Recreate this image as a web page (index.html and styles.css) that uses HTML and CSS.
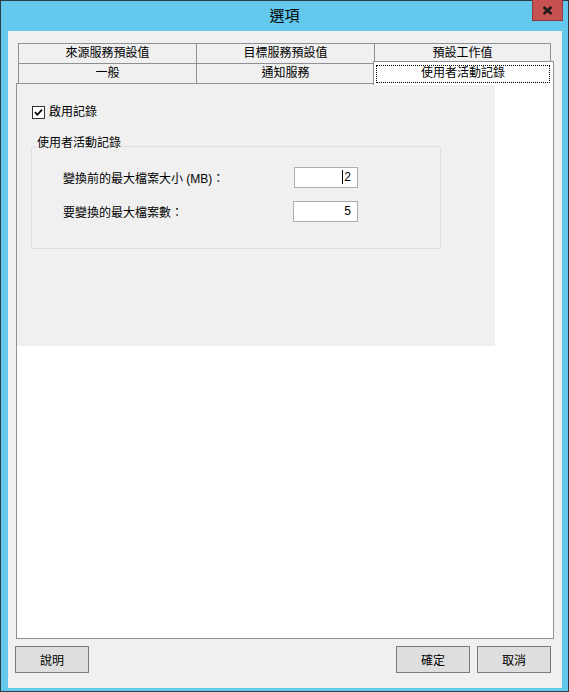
FILE: index.html
```
<!DOCTYPE html>
<html lang="zh-Hant">
<head>
<meta charset="UTF-8">
<title>選項</title>
<link rel="stylesheet" href="styles.css">
</head>
<body>
<div class="win">
  <div class="titlebar">
    <div class="title">選項</div>
    <div class="close">
      <svg width="11" height="9" viewBox="0 0 11 9"><path d="M1.5 1 L9.5 8 M9.5 1 L1.5 8" stroke="#1a1a1a" stroke-width="2.4" fill="none"/></svg>
    </div>
  </div>

  <div class="client">
    <!-- tab strip, two rows -->
    <div class="tabs">
      <div class="tabrow">
        <div class="tab">來源服務預設值</div>
        <div class="tab">目標服務預設值</div>
        <div class="tab last">預設工作值</div>
      </div>
      <div class="tabrow row2">
        <div class="tab">一般</div>
        <div class="tab">通知服務</div>
        <div class="tab active"><div class="focus">使用者活動記錄</div></div>
      </div>
    </div>

    <div class="panel">
      <div class="page">
        <label class="check">
          <svg width="13" height="13" viewBox="0 0 13 13"><rect x="0.5" y="0.5" width="12" height="12" fill="#fff" stroke="#333"/><path d="M3 6.2 L5.4 8.8 L10 3.6" stroke="#000" stroke-width="1.7" fill="none"/></svg>
          啟用記錄
        </label>
        <div class="group">
          <div class="group-title"><span>使用者活動記錄</span></div>
          <div class="field">
            <span class="lbl">變換前的最大檔案大小 (MB)：</span>
            <div class="num first"><span class="caret"></span>2</div>
          </div>
          <div class="field second">
            <span class="lbl">要變換的最大檔案數：</span>
            <div class="num">5</div>
          </div>
        </div>
      </div>
    </div>

    <div class="buttons">
      <button>說明</button>
      <span class="spacer"></span>
      <button>確定</button>
      <button>取消</button>
    </div>
  </div>
</div>
</body>
</html>
```

FILE: styles.css
```
*{box-sizing:border-box}
body{margin:0;font:12px "Liberation Sans","Noto Sans CJK TC",sans-serif;color:#000}
/* window frame */
.win{width:569px;height:692px;background:#62c9ec;border:1px solid #2f3b42;display:flex;flex-direction:column}
.titlebar{height:30px;display:grid;grid-template-columns:1fr auto 1fr;align-items:center}
.title{grid-column:2;font-size:15px;line-height:18px}
.close{grid-column:3;justify-self:end;align-self:start;width:31px;height:21px;margin:-1px 5px 0 0;
       background:#c75050;border:1px solid #8f3b3b;border-top:0;display:flex;align-items:center;justify-content:center}
.client{flex:1;margin:0 6px 3px 7px;background:#f0f0f0;padding-top:12px;display:flex;flex-direction:column}
/* tabs */
.tabs{margin:0 8px;padding-left:2px}
.tabrow{display:flex;align-items:flex-start}
.tab{width:179px;height:21px;margin-right:-1px;border:1px solid #8e9096;background:#f0f0f0;
     text-align:center;line-height:19px;white-space:nowrap}
.tab.last{width:177px}
.row2{margin-top:-1px}
.row2 .tab{height:20px;border-bottom:0}
.row2 .tab.active{position:relative;z-index:1;width:181px;height:24px;margin:-2px 0 -2px -1px;background:#fff;padding:3px 3px 2px 2px}
.focus{height:18px;border:1px dotted #000;line-height:14px}
/* page */
.panel{margin:0 8px;height:556px;border:1px solid #8e9096;background:#fff}
.page{width:478px;height:262px;background:#f0f0f0;padding:22px 0 0 14px}
.check{display:flex;align-items:center;gap:4px;margin-left:1px;height:13px;line-height:13px}
.check svg{display:block}
.group{width:410px;margin-top:27px;border:1px solid #d9dee3;border-radius:3px;padding:0 0 26px 31px}
.group-title{margin:-11px 0 0 -27px;line-height:14px}
.group-title span{background:#f0f0f0;padding:0 1px}
.field{display:flex;align-items:center;height:21px;margin-top:17px}
.field.second{margin-top:13px}
.lbl{width:230px;white-space:nowrap}
.num{width:65px;height:21px;border:1px solid #abadb3;background:#fff;text-align:right;padding-right:6px;line-height:19px}
.num.first{width:64px;margin-left:1px}
.caret{display:inline-block;width:1px;height:14px;background:#000;vertical-align:-3px;margin-right:1px}
/* bottom buttons */
.buttons{display:flex;gap:7px;margin:7px 11px 0 7px}
.buttons button{width:74px;height:27px;border:1px solid #7b7b7b;background:#dedede;font:inherit;color:#000;padding:0}
.spacer{flex:1}
```
